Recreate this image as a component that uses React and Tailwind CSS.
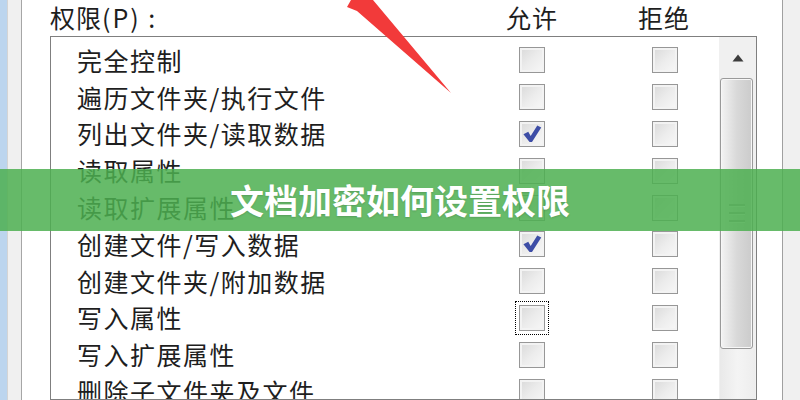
import React from 'react';

const rows = [
  { label: '完全控制', allow: false },
  { label: '遍历文件夹/执行文件', allow: false },
  { label: '列出文件夹/读取数据', allow: true },
  { label: '读取属性', allow: false },
  { label: '读取扩展属性', allow: false },
  { label: '创建文件/写入数据', allow: true },
  { label: '创建文件夹/附加数据', allow: false },
  { label: '写入属性', allow: false, focused: true },
  { label: '写入扩展属性', allow: false },
  { label: '删除子文件夹及文件', allow: false },
];

function Checkbox({ checked, focused }) {
  return (
    <div
      className={`w-[26px] h-[26px] shrink-0 border border-[#979797] bg-gradient-to-br from-[#d9d9d9] via-[#ececec] to-[#f8f8f8] shadow-[inset_0_0_0_2px_#f3f3f3] flex items-center justify-center ${
        focused ? 'outline-1 outline-dotted outline-black outline-offset-[3px]' : ''
      }`}
    >
      {checked && (
        <svg width="22" height="22" viewBox="0 0 20 20">
          <path d="M2.2 10.2 L6.6 8 L8.8 11.8 L14.8 2.2 L18.4 4.2 L10 17.2 L7.8 17.2 Z" fill="#3d4da6" />
        </svg>
      )}
    </div>
  );
}

function Scrollbar() {
  return (
    <div className="w-[37px] shrink-0 bg-[#f0f0f0] flex flex-col">
      <div className="h-[41px] shrink-0 flex items-center justify-center">
        <svg width="12" height="8" viewBox="0 0 12 8">
          <path d="M6 0.5 L11.5 7.5 L0.5 7.5 Z" fill="#3c3c3c" />
        </svg>
      </div>
      <div className="ml-[1px] mr-[3px] h-[271px] shrink-0 rounded-[3px] border border-[#9a9a9a] bg-gradient-to-r from-[#f4f4f4] via-[#d9d9d9] to-[#cbcbcb] shadow-[inset_0_0_0_1px_#f7f7f7] flex flex-col items-center justify-center gap-[5px]">
        <div className="w-[16px] h-[3px] bg-[#a9a9a9] border-b border-[#f2f2f2]" />
        <div className="w-[16px] h-[3px] bg-[#a9a9a9] border-b border-[#f2f2f2]" />
        <div className="w-[16px] h-[3px] bg-[#a9a9a9] border-b border-[#f2f2f2]" />
      </div>
      <div className="flex-1 mx-[1px] bg-gradient-to-r from-[#e9e9e9] via-[#f4f4f4] to-[#ededed]" />
    </div>
  );
}

export default function App() {
  return (
    <div
      className="relative w-[800px] h-[400px] overflow-hidden bg-white flex text-[#1e1e1e]"
      style={{ fontFamily: '"Noto Sans CJK SC", "Noto Sans", sans-serif' }}
    >
      {/* left window edges */}
      <div className="w-[7px] shrink-0 bg-[#bcd5ee]" />
      <div className="w-[15px] shrink-0 bg-[#f0f0f0] border-l border-[#d4d4d4] border-r border-r-[#a6a6a6]" />

      {/* main panel */}
      <div className="w-[760px] shrink-0 pl-[28px] flex flex-col">
        <div className="h-[36px] shrink-0 flex items-center pb-[2px] text-[25px] leading-none tracking-[1px]">
          <div className="w-[442px]">
            权限<span className="tracking-[2px]">(P) :</span>
          </div>
          <div className="w-[80px] text-center">允许</div>
          <div className="w-[52px]" />
          <div className="w-[80px] text-center">拒绝</div>
        </div>

        <div className="w-[707px] flex-1 min-h-0 overflow-hidden border border-[#7f7f7f] flex">
          <div className="flex-1 pt-[5px] flex flex-col">
            {rows.map((r) => (
              <div key={r.label} className="h-[36.8px] shrink-0 flex items-center">
                <div className="w-[468px] pl-[26px] text-[25px] leading-none tracking-[1.5px] whitespace-nowrap">
                  {r.label}
                </div>
                <Checkbox checked={r.allow} focused={r.focused} />
                <div className="w-[107px]" />
                <Checkbox checked={false} />
              </div>
            ))}
          </div>
          <Scrollbar />
        </div>
      </div>

      {/* right window edge */}
      <div className="w-[18px] shrink-0 bg-[#f0f0f0] border-l border-[#a0a0a0]" />

      {/* red annotation arrow */}
      <svg className="absolute inset-0 pointer-events-none" width="800" height="400" viewBox="0 0 800 400">
        <polygon points="347,7 351,0 373,0 451,93 357,11" fill="#f23a3a" />
      </svg>

      {/* title banner */}
      <div className="absolute left-0 right-0 top-[169px] h-[62px] bg-[rgba(76,175,80,0.85)] flex items-center justify-center">
        <span className="text-white text-[34px] font-bold leading-none [text-shadow:0_1px_2px_rgba(0,0,0,0.15)]">
          文档加密如何设置权限
        </span>
      </div>
    </div>
  );
}
